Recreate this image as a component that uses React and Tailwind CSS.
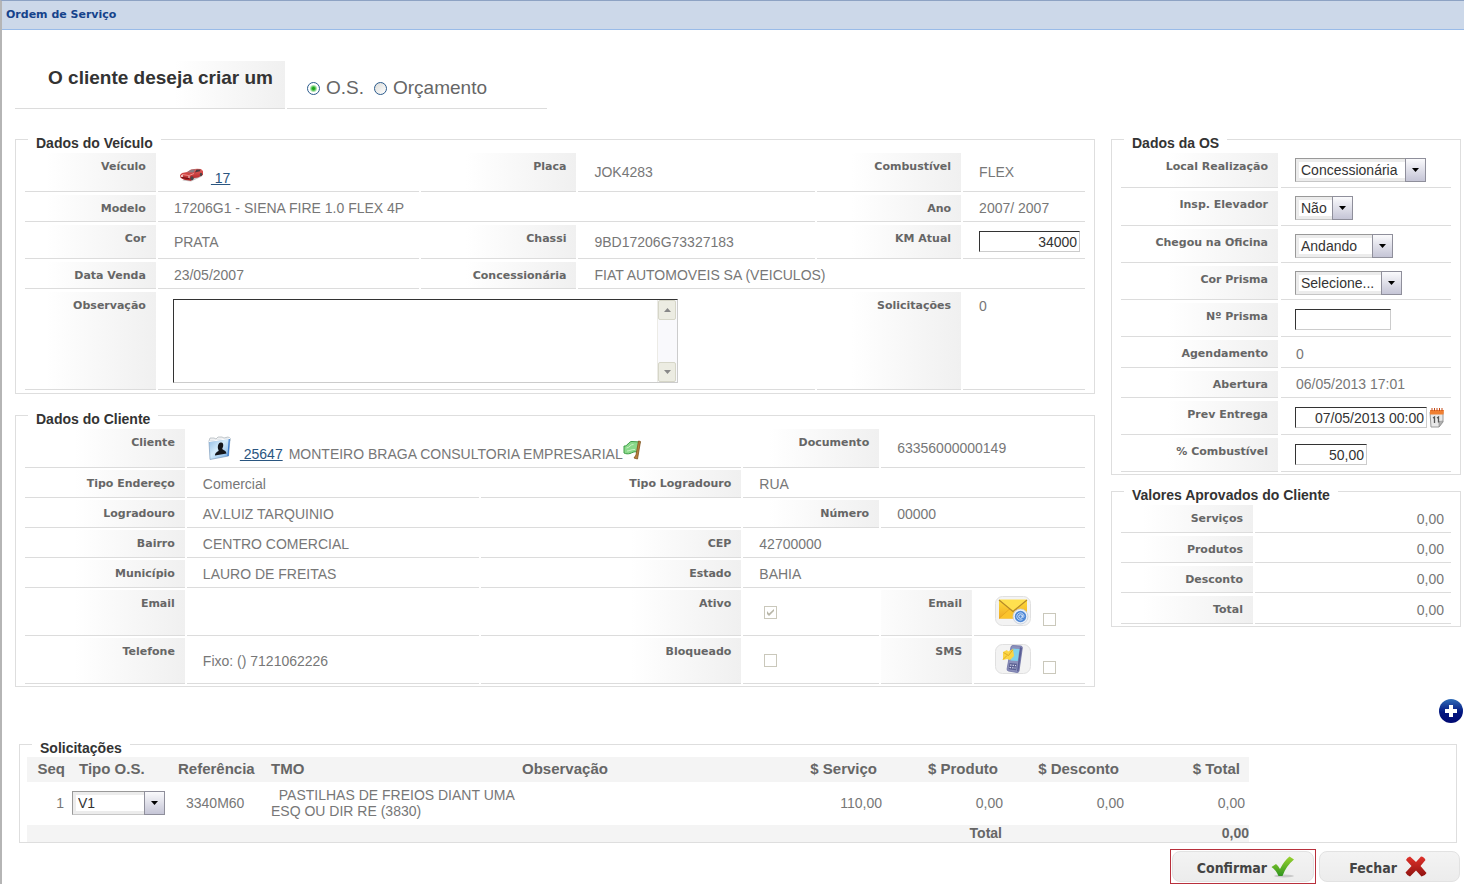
import React from "react";

const vehicleGrid =
  "grid grid-cols-[131fr_261fr_156fr_237fr_144fr_122fr] gap-x-[2px] gap-y-[3px] px-[9px] pb-[3px] pt-[2px]";
const clientGrid =
  "grid grid-cols-[160fr_292fr_261fr_136fr_91fr_111fr] gap-[2px] px-[9px] pb-[2px] pt-[2px]";

/* Fieldset with its title slightly below the top border */
function Panel({ title, className = "", children }) {
  return (
    <fieldset className={`min-w-0 border border-[#dedede] ${className}`}>
      <legend className="ml-3 px-2 pt-2 text-[14px] font-bold leading-4 text-[#333]">
        {title}
      </legend>
      {children}
    </fieldset>
  );
}

/* Grey shaded label cell */
function Label({ htmlFor, children }) {
  const Tag = htmlFor ? "label" : "div";
  return (
    <Tag
      htmlFor={htmlFor}
      className="block border-b border-[#dcdcdc] bg-linear-to-r from-white to-[#f0f0f0] bg-[length:110px_100%] bg-right bg-no-repeat pr-[10px] pt-[6px] text-right font-['DejaVu_Sans',sans-serif] text-[11px] font-bold leading-4 text-[#666]"
    >
      {children}
    </Tag>
  );
}

function Value({ className = "items-center pl-4", children }) {
  return (
    <div className={`flex min-w-0 whitespace-nowrap border-b border-[#dcdcdc] leading-4 ${className}`}>
      {children}
    </div>
  );
}

function Select({ id, label, width, options }) {
  return (
    <div className={`relative h-6 ${width}`}>
      <select
        id={id}
        aria-label={label}
        className="h-6 w-full appearance-none border border-[#c6c6c6] border-t-[#999] border-l-[#999] bg-white pl-[5px] pr-[21px] text-[14px] text-[#333] shadow-[inset_0_0_0_3px_#ececec]"
      >
        {options.map((o) => (
          <option key={o}>{o}</option>
        ))}
      </select>
      <span className="pointer-events-none absolute right-0 top-0 flex h-6 w-[21px] items-center justify-center border border-[#8f8f9b] bg-linear-to-b from-[#fafafc] to-[#c5c5d6]">
        <svg width="7" height="4" viewBox="0 0 7 4">
          <path d="M0 0h7L3.500 4z" fill="#000" />
        </svg>
      </span>
    </div>
  );
}

function TextInput({ id, width, value = "" }) {
  return (
    <input
      id={id}
      type="text"
      defaultValue={value}
      className={`h-[21px] border border-[#ccc] border-l-[#333] border-t-[#333] bg-white px-[2px] text-right text-[14px] text-[#333] ${width}`}
    />
  );
}

function Checkbox({ id, label, checked = false }) {
  return (
    <span className="relative flex h-[13px] w-[13px]">
      <input
        id={id}
        type="checkbox"
        aria-label={label}
        defaultChecked={checked}
        disabled
        className="peer h-[13px] w-[13px] appearance-none border border-[#cac8bb] bg-white"
      />
      <svg
        className="pointer-events-none absolute left-[3px] top-[3px] hidden peer-checked:block"
        width="7"
        height="7"
        viewBox="0 0 7 7"
      >
        <path d="M0 2v3l2 2 5-5V0L2 4.500z" fill="#b8b6a8" />
      </svg>
    </span>
  );
}

function Radio({ id, checked }) {
  return (
    <input
      id={id}
      type="radio"
      name="tipo"
      defaultChecked={checked}
      className="h-[13px] w-[13px] appearance-none rounded-full border border-[#2a5a8c] bg-linear-to-br from-[#dcdcd8] to-white checked:bg-[radial-gradient(circle,#1fa51f_0_1px,#5cc65c_2px,#fff_4px)]"
    />
  );
}

function CarIcon() {
  return (
    <svg width="25" height="14" viewBox="0 0 25 14">
      <defs>
        <linearGradient id="car" x1="0" y1="0" x2="0" y2="1">
          <stop offset="0" stopColor="#e8625e" />
          <stop offset="1" stopColor="#a81a1e" />
        </linearGradient>
      </defs>
      <path d="M3 12.500 12 13.500l11-5-2-1z" fill="#c9c4c4" />
      <path d="M1 7 3 5l5-1L12 1.500Q17 .300 22 1l2 2v4l-5 2.500-4 .5-3 2.800-7-1-3.500-2z" fill="url(#car)" />
      <path d="M8 4.200 12 1.700l4.500-.5L14.500 4.500z" fill="#8a7a80" />
      <path d="m15.800 4.400 1.700-2.900 4 .1-.5 1.600z" fill="#4d3b40" />
      <path d="m3 6.500 7 1 5-2" stroke="#f4918b" fill="none" />
      <path d="m2.500 9.500 7.500 1.200" stroke="#6a1013" />
      <ellipse cx="13" cy="10.300" rx="1.600" ry="2" fill="#4a4648" />
      <ellipse cx="22" cy="6.500" rx="1.200" ry="1.700" fill="#4a4648" />
      <circle cx="3" cy="8" r=".9" fill="#fff" />
      <circle cx="10" cy="9" r=".8" fill="#fff" />
    </svg>
  );
}

function ClientIcon() {
  return (
    <svg width="23" height="24" viewBox="0 0 23 24">
      <defs>
        <linearGradient id="card" x1="0" y1="0" x2="1" y2="1">
          <stop offset="0" stopColor="#8fbbe4" />
          <stop offset=".45" stopColor="#d4ecfc" />
          <stop offset=".75" stopColor="#9cc7ee" />
          <stop offset="1" stopColor="#3f78c4" />
        </linearGradient>
      </defs>
      <path d="m1 5 1-3h4l2 1 2-2h4l2 1 4-1 2 1v3L2 7z" fill="#f0f1f2" stroke="#b3babf" strokeWidth=".8" />
      <path d="M1 5.500 22 2.500 20.500 20 2 23.500z" fill="url(#card)" stroke="#7f9ebd" strokeWidth=".7" />
      <path d="M1 5.500 22 2.500" stroke="#fff" />
      <path d="m21.300 3-1.300 17" stroke="#3f7fd0" strokeWidth="1.200" />
      <path d="M12.500 6.500c2.300-.4 3 1.300 2.700 3.500-.2 1.400-.9 2-.9 3 1 1.400 3.700 1.200 4.200 4.500L7 19.500c0-3 2.500-3.600 3.700-4.800-.2-1-.9-1.500-.9-3.200 0-2.500.9-4.700 2.700-5z" fill="#14161b" />
    </svg>
  );
}

function FlagIcon() {
  return (
    <svg width="19" height="20" viewBox="0 0 19 20">
      <path d="M1 6C4 7 6 1 9 1.500s5 0 8 .5l-3 10c-3-1-5 1-7 1.500S3 14 1 13z" fill="#8ad98b" stroke="#3d9d47" />
      <path d="M3.500 8c3 0 4-4 7-3.500M4 11c3 0 5-2 8-1.500" stroke="#c8f3c2" fill="none" />
      <path d="m15.500 1 2 .5-3 17.500-3.500-1 2-3z" fill="#b9803d" stroke="#80501d" strokeWidth=".8" />
    </svg>
  );
}

function MailIcon() {
  return (
    <svg width="36" height="30" viewBox="0 0 36 30">
      <defs>
        <linearGradient id="mail" x1="0" y1="0" x2="0" y2="1">
          <stop offset="0" stopColor="#ffdb3a" />
          <stop offset="1" stopColor="#efaa24" />
        </linearGradient>
      </defs>
      <rect x=".5" y=".5" width="35" height="29" rx="7" fill="#f3f3f3" stroke="#e0e0e0" />
      <path d="M4 4h28v18.500H4z" fill="url(#mail)" />
      <path d="m4 22.500 10-9h8l10 9" fill="#fbc42c" stroke="#e3a01c" strokeWidth=".7" />
      <path d="m4 3.500 14 11.500L32 3.500z" fill="#ffe04f" />
      <path d="m4 4 14 11.500L32 4" fill="none" stroke="#b58a2a" strokeWidth="1.200" />
      <circle cx="25.500" cy="20.500" r="7.500" fill="#eef2f8" stroke="#c3cbd9" strokeWidth=".8" />
      <circle cx="25.500" cy="20.500" r="5.700" fill="#5089d6" />
      <circle cx="25.500" cy="20.500" r="1.800" fill="none" stroke="#dbe9fb" />
      <path d="M27.300 18.500v2.500q1.500 1 1.700-.8a3.600 3.600 0 1 0-1.500 3.200" fill="none" stroke="#dbe9fb" strokeWidth=".8" />
    </svg>
  );
}

function PhoneIcon() {
  return (
    <svg width="36" height="30" viewBox="0 0 36 30">
      <rect x=".5" y=".5" width="35" height="29" rx="7" fill="#f3f3f3" stroke="#e0e0e0" />
      <path d="m18 1.500 8 .5q1.500.3 1.300 2L24 27q-.4 1.700-2 1.500l-8.500-1.500q-1.700-.4-1.400-2L16 3q.4-1.600 2-1.500z" fill="#8b90bb" stroke="#6c70a3" strokeWidth=".8" />
      <path d="m25 3-3 24.500 1.500-.5L27 4z" fill="#595d95" />
      <path d="m17.500 4.500 7 .5-1.800 12-7.200-.5z" fill="#7fd2ec" />
      <path d="m14.500 19 7.500.8-1 6.500-7.500-1z" fill="#5b6092" />
      <path d="m15 21 6 .6M14.500 23.500l6 .6" stroke="#d6d9ee" strokeDasharray="1.500 1" strokeWidth="1.200" />
      <path d="m8 8 4-2 1 1.500 5-2.500 1 7-4 4-3-1-4 1z" fill="#fbd544" />
      <path d="m8.500 8.500 5 3 4.500-6M8 15.500l4-4" stroke="#e0ab25" fill="none" />
    </svg>
  );
}

function CalendarIcon() {
  return (
    <svg width="16" height="20" viewBox="0 0 16 20">
      <path d="M1 4h13v10l-4 5H2z" fill="#e9e9e9" stroke="#9a9a9a" />
      <path d="m14 13-4 .5V19z" fill="#b5b5b5" stroke="#8e8e8e" strokeWidth=".6" />
      <path d="M1 2h14l-.5 4.500H1z" fill="#f08033" />
      <path d="M3 0v3M5.500 0v3M8 0v3M10.500 0v3M13 0v3" stroke="#c34b19" />
      <path d="m4 10 1.500-1v6M8 10l1.500-1v5.500" stroke="#555" strokeWidth="1.300" fill="none" />
    </svg>
  );
}

function PlusIcon() {
  return (
    <svg width="24" height="24" viewBox="0 0 24 24">
      <defs>
        <linearGradient id="plus" x1="0" y1="0" x2="0" y2="1">
          <stop offset="0" stopColor="#2f6cb8" />
          <stop offset=".55" stopColor="#021680" />
          <stop offset="1" stopColor="#010a72" />
        </linearGradient>
      </defs>
      <circle cx="12" cy="12" r="12" fill="url(#plus)" />
      <path d="M10 6h4v4h4v4h-4v4h-4v-4H6v-4h4z" fill="#fff" />
    </svg>
  );
}

function CheckIcon() {
  return (
    <svg width="24" height="22" viewBox="0 0 24 22">
      <defs>
        <linearGradient id="check" x1="0" y1="0" x2="0" y2="1">
          <stop offset="0" stopColor="#9bd42e" />
          <stop offset="1" stopColor="#2f941f" />
        </linearGradient>
      </defs>
      <ellipse cx="13" cy="20" rx="10" ry="1.500" fill="#c9c9c9" />
      <path d="m.5 11 4.500-3q2 1.500 4 5Q13 5 18.500.5L23 3.500Q15 10 11.500 20h-4Q5 14 .5 11z" fill="url(#check)" />
    </svg>
  );
}

function CrossIcon() {
  return (
    <svg width="22" height="21" viewBox="0 0 22 21">
      <defs>
        <linearGradient id="cross" x1="0" y1="0" x2="0" y2="1">
          <stop offset="0" stopColor="#e0322b" />
          <stop offset="1" stopColor="#8f120f" />
        </linearGradient>
      </defs>
      <path d="m5 .5 6 5.500 5-5.500q3 0 4.500 3.500L15.500 10l6 7q-1.500 3-5 3.500L11 14.500l-6 6q-3-1-4.500-4L6.500 10l-5.500-6q1-3 4-3.500z" fill="url(#cross)" />
    </svg>
  );
}

const columns = [
  { title: "Seq", head: "pr-[7px] text-right", width: "w-[45px]" },
  { title: "Tipo O.S.", head: "pl-[7px] text-left", width: "w-[99px]" },
  { title: "Referência", head: "pl-[7px] text-left", width: "w-[100px]" },
  { title: "TMO", head: "text-left", width: "w-[251px]" },
  { title: "Observação", head: "text-left", width: "w-[243px]" },
  { title: "$ Serviço", head: "pr-[8px] text-right", width: "w-[120px]" },
  { title: "$ Produto", head: "pr-[8px] text-right", width: "w-[121px]" },
  { title: "$ Desconto", head: "pr-[8px] text-right", width: "w-[121px]" },
  { title: "$ Total", head: "pr-[9px] text-right", width: "w-[122px]" },
];

const totals = ["Serviços", "Produtos", "Desconto", "Total"];

export default function App() {
  return (
    <div className="min-h-screen border-l-2 border-t border-l-[#b5b5b5] border-t-[#8da2c3] bg-white font-['Liberation_Sans',Arial,sans-serif] text-[14px] text-[#777]">
      <header className="flex h-[29px] items-center border-b border-[#99bbe8] bg-[#ccd8e9] pl-1">
        <h1 className="font-['DejaVu_Sans',sans-serif] text-[11px] font-bold text-[#15428b]">
          Ordem de Serviço
        </h1>
      </header>

      {/* O.S. ou Orçamento */}
      <div className="ml-[13px] mt-[31px] flex h-12 gap-[2px] text-[19px] leading-6">
        <div className="w-[270px] border-b border-[#dcdcdc] bg-linear-to-r from-white to-[#f0f0f0] bg-[length:110px_100%] bg-right bg-no-repeat pr-3 pt-[5px] text-right font-bold text-[#333]">
          O cliente deseja criar um
        </div>
        <div className="flex w-[260px] items-end border-b border-[#dcdcdc] pb-2 pl-5 text-[#666]">
          <label htmlFor="os" className="flex items-center gap-[6px]">
            <Radio id="os" checked />
            O.S.
          </label>
          <label htmlFor="orcamento" className="ml-[10px] flex items-center gap-[6px]">
            <Radio id="orcamento" />
            Orçamento
          </label>
        </div>
      </div>

      <div className="ml-[13px] mr-[3px] mt-[18px] flex items-start gap-4">
        <div className="flex min-w-0 flex-1 flex-col gap-[9px]">
          {/* Dados do Veículo */}
          <Panel title="Dados do Veículo">
            <div className={`${vehicleGrid} grid-rows-[39px_27px_34px_27px_98px]`}>
              <Label>Veículo</Label>
              <Value className="items-end pb-[5px] pl-[21px]">
                <span className="pb-1">
                  <CarIcon />
                </span>
                <a href="#veiculo" className="ml-[7px] text-[#2a5580] underline">&nbsp;17</a>
              </Value>
              <Label>Placa</Label>
              <Value>JOK4283</Value>
              <Label>Combustível</Label>
              <Value>FLEX</Value>

              <Label>Modelo</Label>
              <Value className="col-span-3 items-center pl-4">
                17206G1 - SIENA FIRE 1.0 FLEX 4P
              </Value>
              <Label>Ano</Label>
              <Value>2007/ 2007</Value>

              <Label>Cor</Label>
              <Value>PRATA</Value>
              <Label>Chassi</Label>
              <Value>9BD17206G73327183</Value>
              <Label htmlFor="km">KM Atual</Label>
              <Value>
                <TextInput id="km" width="w-[101px]" value="34000" />
              </Value>

              <Label>Data Venda</Label>
              <Value>23/05/2007</Value>
              <Label>Concessionária</Label>
              <Value className="col-span-3 items-center pl-4">
                FIAT AUTOMOVEIS SA (VEICULOS)
              </Value>

              <Label htmlFor="observacao">Observação</Label>
              <Value className="col-span-3 items-center pl-[15px]">
                <div className="flex h-[84px] w-[505px] border border-[#ccc] border-l-[#333] border-t-[#333]">
                  <textarea
                    id="observacao"
                    className="min-w-0 flex-1 resize-none overflow-hidden bg-white px-1 text-[#333]"
                  />
                  <div className="flex w-5 flex-col items-center justify-between border-l border-[#ecebe6] bg-[#f9f9fc]">
                    <span className="flex h-5 w-[18px] items-center justify-center rounded-[2px] border border-[#d6d6c8] bg-[#ecece2]">
                      <svg width="7" height="4" viewBox="0 0 7 4">
                        <path d="M0 4h7L3.500 0z" fill="#888" />
                      </svg>
                    </span>
                    <span className="flex h-5 w-[18px] items-center justify-center rounded-[2px] border border-[#d6d6c8] bg-[#ecece2]">
                      <svg width="7" height="4" viewBox="0 0 7 4">
                        <path d="M0 0h7L3.500 4z" fill="#888" />
                      </svg>
                    </span>
                  </div>
                </div>
              </Value>
              <Label>Solicitações</Label>
              <Value className="items-start pl-4 pt-[6px]">0</Value>
            </div>
          </Panel>

          {/* Dados do Cliente */}
          <Panel title="Dados do Cliente">
            <div className={`${clientGrid} grid-rows-[39px_28px_28px_28px_28px_46px_46px]`}>
              <Label>Cliente</Label>
              <Value className="col-span-2 items-end pb-[5px] pl-[21px]">
                <span className="pb-[2px]">
                  <ClientIcon />
                </span>
                <a href="#cliente" className="ml-[9px] text-[#2a5580] underline">&nbsp;25647</a>
                <span className="ml-[6px]">MONTEIRO BRAGA CONSULTORIA EMPRESARIAL</span>
                <span className="pb-[2px]">
                  <FlagIcon />
                </span>
              </Value>
              <Label>Documento</Label>
              <Value className="col-span-2 items-center pl-4">63356000000149</Value>

              <Label>Tipo Endereço</Label>
              <Value>Comercial</Value>
              <Label>Tipo Logradouro</Label>
              <Value className="col-span-3 items-center pl-4">RUA</Value>

              <Label>Logradouro</Label>
              <Value className="col-span-2 items-center pl-4">AV.LUIZ TARQUINIO</Value>
              <Label>Número</Label>
              <Value className="col-span-2 items-center pl-4">00000</Value>

              <Label>Bairro</Label>
              <Value>CENTRO COMERCIAL</Value>
              <Label>CEP</Label>
              <Value className="col-span-3 items-center pl-4">42700000</Value>

              <Label>Município</Label>
              <Value>LAURO DE FREITAS</Value>
              <Label>Estado</Label>
              <Value className="col-span-3 items-center pl-4">BAHIA</Value>

              <Label>Email</Label>
              <Value />
              <Label htmlFor="ativo">Ativo</Label>
              <Value className="items-center pl-[21px]">
                <Checkbox id="ativo" checked />
              </Value>
              <Label htmlFor="email">Email</Label>
              <Value className="items-end gap-3 pb-[9px] pl-[21px]">
                <MailIcon />
                <Checkbox id="email" />
              </Value>

              <Label>Telefone</Label>
              <Value>Fixo: () 7121062226</Value>
              <Label htmlFor="bloqueado">Bloqueado</Label>
              <Value className="items-center pl-[21px]">
                <Checkbox id="bloqueado" />
              </Value>
              <Label htmlFor="sms">SMS</Label>
              <Value className="items-end gap-3 pb-[9px] pl-[21px]">
                <PhoneIcon />
                <Checkbox id="sms" />
              </Value>
            </div>
          </Panel>
        </div>

        <div className="flex w-[350px] flex-col gap-1">
          {/* Dados da OS */}
          <Panel title="Dados da OS">
            <div className="grid grid-cols-[157px_1fr] grid-rows-[35px_35px_34px_34px_34px_28px_27px_34px_34px] gap-[3px] px-[9px] pb-[2px] pt-[2px]">
              <Label htmlFor="local">Local Realização</Label>
              <Value className="items-center pl-[14px]">
                <Select id="local" width="w-[131px]" options={["Concessionária"]} />
              </Value>
              <Label htmlFor="elevador">Insp. Elevador</Label>
              <Value className="items-center pl-[14px]">
                <Select id="elevador" width="w-[58px]" options={["Não", "Sim"]} />
              </Value>
              <Label htmlFor="chegou">Chegou na Oficina</Label>
              <Value className="items-center pl-[14px]">
                <Select id="chegou" width="w-[98px]" options={["Andando"]} />
              </Value>
              <Label htmlFor="cor">Cor Prisma</Label>
              <Value className="items-center pl-[14px]">
                <Select id="cor" width="w-[107px]" options={["Selecione..."]} />
              </Value>
              <Label htmlFor="prisma">Nº Prisma</Label>
              <Value className="items-center pl-[14px]">
                <TextInput id="prisma" width="w-24" />
              </Value>
              <Label>Agendamento</Label>
              <Value className="items-center pl-[15px]">0</Value>
              <Label>Abertura</Label>
              <Value className="items-center pl-[15px]">06/05/2013 17:01</Value>
              <Label htmlFor="entrega">Prev Entrega</Label>
              <Value className="items-center gap-[2px] pl-[14px]">
                <TextInput id="entrega" width="w-[132px]" value="07/05/2013 00:00" />
                <CalendarIcon />
              </Value>
              <Label htmlFor="combustivel">% Combustível</Label>
              <Value className="items-center pl-[14px]">
                <TextInput id="combustivel" width="w-[72px]" value="50,00" />
              </Value>
            </div>
          </Panel>

          {/* Valores Aprovados */}
          <Panel title="Valores Aprovados do Cliente">
            <div className="grid grid-cols-[132px_1fr] grid-rows-[28px_27px_27px_28px] gap-x-[2px] gap-y-[3px] px-[9px] pb-[2px] pt-[2px]">
              {totals.map((t) => (
                <React.Fragment key={t}>
                  <Label>{t}</Label>
                  <Value className="items-center justify-end pr-[7px]">0,00</Value>
                </React.Fragment>
              ))}
            </div>
          </Panel>
        </div>
      </div>

      <div className="mb-[9px] mr-px mt-3 flex justify-end">
        <button type="button" aria-label="Adicionar">
          <PlusIcon />
        </button>
      </div>

      {/* Solicitações */}
      <Panel title="Solicitações" className="ml-[17px] mr-[7px]">
        <table className="ml-[7px] mt-px w-[1222px] table-fixed border-collapse">
          <thead>
            <tr className="h-[25px] bg-[#f4f4f4] text-[15px] text-[#666]">
              {columns.map((c) => (
                <th key={c.title} className={`p-0 pb-[2px] font-bold leading-5 ${c.head} ${c.width}`}>
                  {c.title}
                </th>
              ))}
            </tr>
          </thead>
          <tbody>
            <tr className="h-[43px] leading-4">
              <td className="p-0 pb-[2px] pr-2 text-right">1</td>
              <td className="p-0 pb-[2px]">
                <Select id="tipo-os" label="Tipo O.S." width="w-[93px]" options={["V1"]} />
              </td>
              <td className="p-0 pb-[2px] pl-[15px]">3340M60</td>
              <td className="p-0 pb-[2px]">
                &nbsp; PASTILHAS DE FREIOS DIANT UMA
                <br />
                ESQ OU DIR RE (3830)
              </td>
              <td className="p-0" />
              <td className="p-0 pb-[2px] pr-[3px] text-right">110,00</td>
              <td className="p-0 pb-[2px] pr-[3px] text-right">0,00</td>
              <td className="p-0 pb-[2px] pr-[3px] text-right">0,00</td>
              <td className="p-0 pb-[2px] pr-1 text-right">0,00</td>
            </tr>
          </tbody>
          <tfoot>
            <tr className="h-[17px] bg-[#f4f4f4] font-bold leading-4 text-[#666]">
              <td colSpan={7} className="p-0 pb-px pr-1 text-right">Total</td>
              <td colSpan={2} className="p-0 pb-px text-right">0,00</td>
            </tr>
          </tfoot>
        </table>
      </Panel>

      <div className="mr-1 mt-[6px] flex items-center justify-end gap-[3px] font-['DejaVu_Sans_Condensed','DejaVu_Sans',sans-serif] text-[14px] font-bold text-[#444]">
        <div className="border border-[#b8303c] p-px">
          <button
            type="button"
            className="flex h-[31px] w-[142px] items-center justify-end gap-1 rounded-lg border border-[#e2e2e2] bg-linear-to-b from-[#f3f3f3] to-[#ececec] pr-[18px]"
          >
            <span className="pt-[3px]">Confirmar</span>
            <CheckIcon />
          </button>
        </div>
        <button
          type="button"
          className="flex h-[31px] w-[141px] items-center justify-end gap-2 rounded-lg border border-[#e2e2e2] bg-linear-to-b from-[#f3f3f3] to-[#ececec] pr-8"
        >
          <span className="pt-[3px]">Fechar</span>
          <CrossIcon />
        </button>
      </div>
    </div>
  );
}
